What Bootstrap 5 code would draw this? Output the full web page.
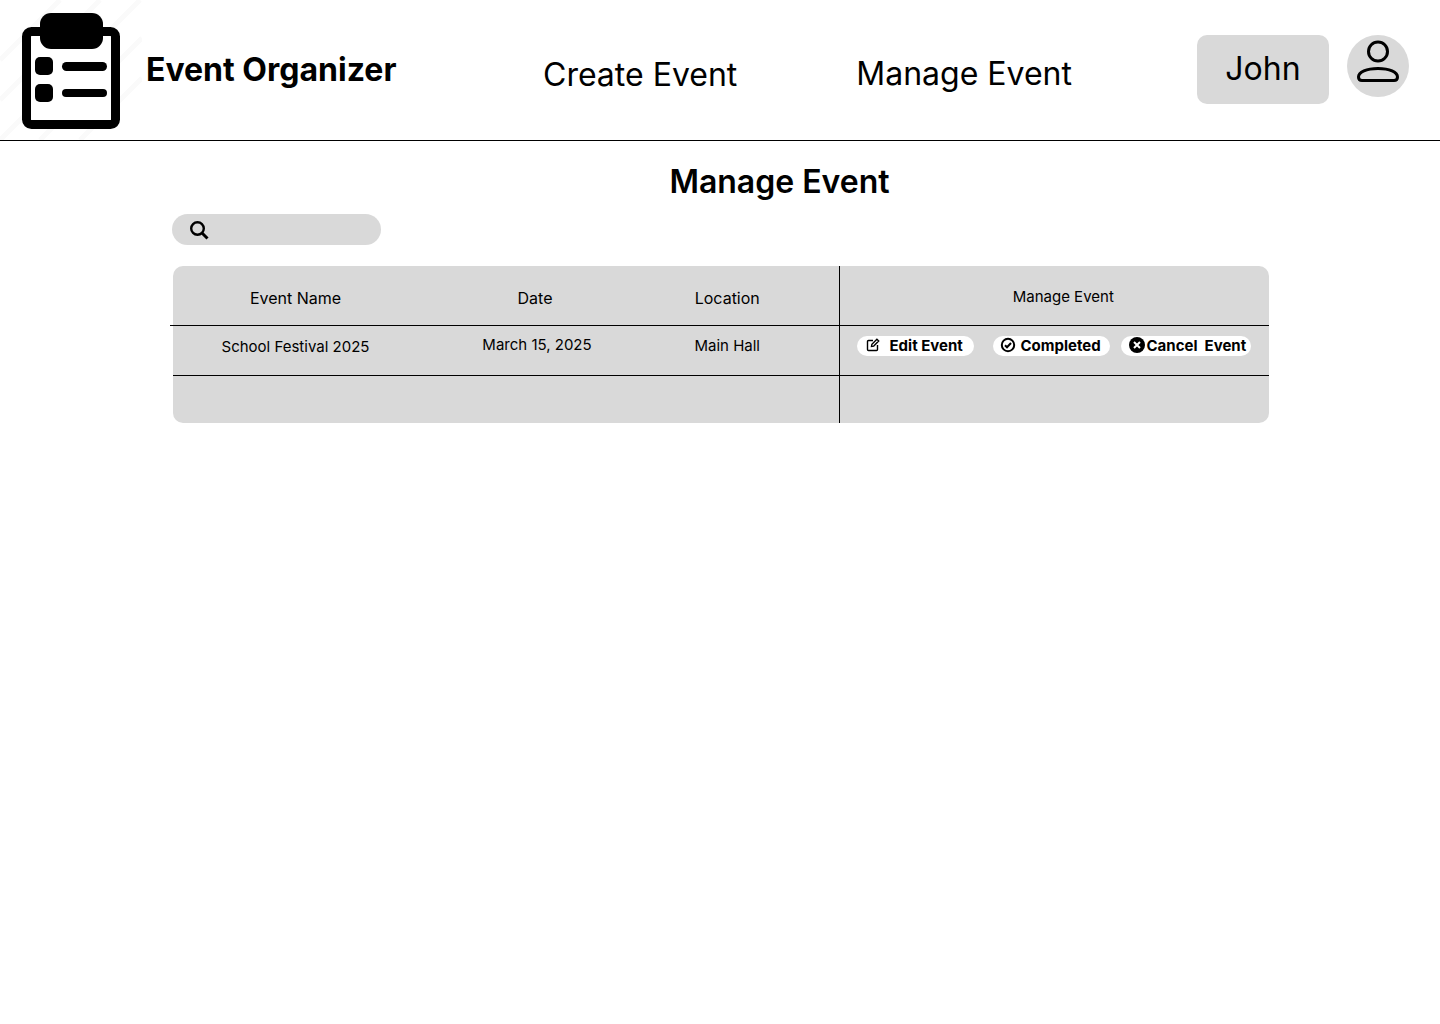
<!DOCTYPE html>
<html lang="en">

<head>
    <meta charset="UTF-8">
    <meta name="viewport" content="width=device-width, initial-scale=1.0">
    <title>Manage Event - Event Organizer</title>
    <link href="https://cdn.jsdelivr.net/npm/bootstrap@5.3.2/dist/css/bootstrap.min.css" rel="stylesheet">
    <style>
        body {
            background-color: #fff;
            color: #000;
            font-family: Inter, "Liberation Sans", sans-serif;
        }

        .top-bar {
            height: 141px;
            border-bottom: 1px solid #000;
        }

        .brand-name {
            width: 251px;
            margin-left: 4px;
            font-size: 32px;
            font-weight: 700;
            color: #000;
            white-space: nowrap;
        }

        .menu-link {
            font-size: 32px;
            color: #000;
            white-space: nowrap;
            text-decoration: none;
        }

        .menu-create {
            margin-left: 146px;
            margin-top: 10px;
        }

        .menu-manage {
            margin-left: 119px;
            margin-top: 8px;
        }

        .user-name {
            width: 132px;
            height: 69px;
            margin-left: 125px;
            margin-top: -2px;
            background-color: #d9d9d9;
            border-radius: 10px;
            font-size: 32px;
        }

        .user-pic {
            width: 62px;
            height: 62px;
            margin-left: 18px;
            margin-top: -9px;
            background-color: #d9d9d9;
        }

        .page-body {
            padding-left: 172px;
            width: 1269px;
        }

        .page-title {
            margin: 21px 0 12px 0;
            padding-left: 118px;
            font-size: 32px;
            font-weight: 600;
            line-height: 40px;
            text-align: center;
        }

        .search-pill {
            width: 209px;
            height: 31px;
            padding-left: 17px;
            background-color: #d9d9d9;
            border-radius: 16px;
        }

        .event-wrap {
            margin: 21px 0 0 1px;
            background-color: #d9d9d9;
            border-radius: 10px;
        }

        .event-table {
            width: 1096px;
            table-layout: fixed;
            border-collapse: collapse;
            font-size: 16px;
        }

        .event-table th {
            position: relative;
            height: 59px;
            padding: 5px 0 0;
            font-weight: 400;
            text-align: center;
        }

        /* the header rule sticks out a little past the grey box */
        .event-table th:first-child::before {
            content: "";
            position: absolute;
            left: -3px;
            bottom: -1px;
            width: 3px;
            height: 1px;
            background-color: #000;
        }

        .event-table td {
            height: 50px;
            padding: 0 0 6px;
            font-size: 15px;
            text-align: center;
        }

        .event-table tr:last-child td {
            height: 48px;
        }

        .event-table thead th,
        .event-table tbody tr:first-child td {
            border-bottom: 1px solid #000;
        }

        .event-table .cell-manage {
            border-left: 1px solid #000;
        }

        .event-table td.cell-manage {
            padding-bottom: 8px;
        }

        .event-table th.cell-manage {
            padding: 3px 0 0 18px;
            font-size: 15px;
        }

        .event-table td.cell-date {
            padding: 0 0 9px 4px;
        }

        .event-table th.cell-location {
            padding-right: 36px;
        }

        .event-table td.cell-location {
            padding: 0 36px 7px 0;
        }

        .row-actions {
            padding: 0 18px 0 17px;
        }

        .act-pill {
            height: 20px;
            background-color: #fff;
            border-radius: 10px;
            font-size: 15px;
            font-weight: 700;
            white-space: nowrap;
        }

        .act-pill svg {
            transform: translateY(-1px);
        }

        .act-edit {
            width: 117px;
            padding-left: 9px;
            gap: 10px;
        }

        .act-done {
            width: 117px;
            margin-left: 19px;
            padding-left: 7px;
            gap: 5px;
        }

        .act-cancel {
            width: 130px;
            margin-left: 11px;
            padding-left: 8px;
            gap: 2px;
        }
    </style>
</head>

<body>
    <!-- Header -->
    <header class="top-bar d-flex align-items-center">
        <svg width="142" height="140" viewBox="0 0 142 140" class="flex-shrink-0">
            <path d="M0 60 60 0M0 100 100 0M0 140 140 0M40 140 142 38M80 140 142 78" stroke="#fafafa" stroke-width="5" />
            <rect x="26.5" y="31.5" width="89" height="93" rx="5" fill="#fff" stroke="#000" stroke-width="9" />
            <rect x="40" y="13" width="63" height="36" rx="11" fill="#000" />
            <rect x="35" y="57" width="18" height="18" rx="5" fill="#000" />
            <rect x="35" y="84" width="18" height="18" rx="5" fill="#000" />
            <rect x="62" y="62" width="45" height="9" rx="4.5" fill="#000" />
            <rect x="62" y="89" width="45" height="8" rx="4" fill="#000" />
        </svg>
        <div class="brand-name">Event Organizer</div>
        <a href="#" class="menu-link menu-create">Create Event</a>
        <a href="#" class="menu-link menu-manage">Manage Event</a>
        <div class="user-name d-flex align-items-center justify-content-center">John</div>
        <div class="user-pic rounded-circle">
            <svg width="62" height="62" viewBox="0 0 62 62" fill="none" stroke="#000" stroke-width="3" class="d-block">
                <circle cx="31" cy="16.5" r="9.5" />
                <path d="M15 45.5c-2.5 0-3.5-1-3.5-3.5 0-5 8-8.5 19.5-8.5s19.5 3.5 19.5 8.5c0 2.5-1 3.5-3.5 3.5z" />
            </svg>
        </div>
    </header>

    <!-- Event list -->
    <main class="page-body">
        <h1 class="page-title">Manage Event</h1>
        <div class="search-pill d-flex align-items-center">
            <svg width="20" height="20" viewBox="0 0 20 20" fill="none" stroke="#000" stroke-width="2.4">
                <circle cx="8.5" cy="8.5" r="6.3" />
                <path d="m13 13 5.5 5.5" stroke-width="3" />
            </svg>
        </div>
        <div class="event-wrap">
            <table class="event-table">
                <colgroup>
                    <col style="width: 245px">
                    <col style="width: 234px">
                    <col style="width: 187px">
                    <col style="width: 430px">
                </colgroup>
                <thead>
                    <tr>
                        <th>Event Name</th>
                        <th>Date</th>
                        <th class="cell-location">Location</th>
                        <th class="cell-manage">Manage Event</th>
                    </tr>
                </thead>
                <tbody>
                    <tr>
                        <td>School Festival 2025</td>
                        <td class="cell-date">March 15, 2025</td>
                        <td class="cell-location">Main Hall</td>
                        <td class="cell-manage">
                            <div class="row-actions d-flex">
                                <span class="act-pill act-edit d-flex align-items-center">
                                    <svg width="14" height="14" viewBox="0 0 14 14" fill="none" stroke="#000" stroke-width="1.4">
                                        <path d="M7 2.5H2.5a1 1 0 0 0-1 1v8a1 1 0 0 0 1 1h8a1 1 0 0 0 1-1V7" />
                                        <path d="m5.5 8.5.4-2.2 5-5 1.8 1.8-5 5z" />
                                    </svg>
                                    Edit Event
                                </span>
                                <span class="act-pill act-done d-flex align-items-center">
                                    <svg width="16" height="16" viewBox="0 0 16 16" fill="none" stroke="#000" stroke-width="2">
                                        <circle cx="8" cy="8" r="6.2" />
                                        <path d="m5 8.3 2 2 4-4.3" />
                                    </svg>
                                    Completed
                                </span>
                                <span class="act-pill act-cancel d-flex align-items-center">
                                    <svg width="16" height="16" viewBox="0 0 16 16">
                                        <circle cx="8" cy="8" r="8" fill="#000" />
                                        <path d="m5 5 6 6m0-6-6 6" stroke="#fff" stroke-width="2" />
                                    </svg>
                                    Cancel&nbsp; Event
                                </span>
                            </div>
                        </td>
                    </tr>
                    <tr>
                        <td></td>
                        <td></td>
                        <td></td>
                        <td class="cell-manage"></td>
                    </tr>
                </tbody>
            </table>
        </div>
    </main>

    <script src="https://cdn.jsdelivr.net/npm/bootstrap@5.3.2/dist/js/bootstrap.bundle.min.js"></script>
</body>

</html>
